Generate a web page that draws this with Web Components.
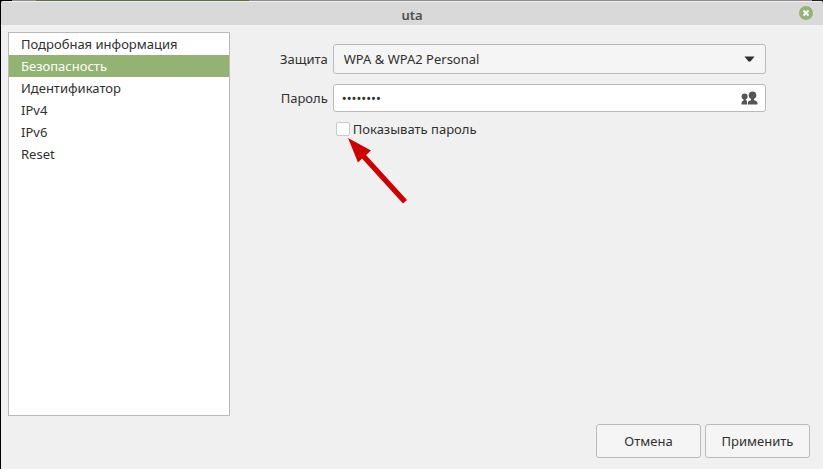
<!DOCTYPE html>
<html lang="ru">
<head>
<meta charset="utf-8">
<meta name="viewport" content="width=device-width, initial-scale=1">
<title>uta</title>
<style>
  body {
    margin: 0;
    background: #000;
    color: #303030;
    font: 13px/22px "Noto Sans", "Open Sans", sans-serif;
  }
</style>
</head>
<body>
<dialog-window heading="uta">
  <page-list slot="sidebar">
    <page-item>Подробная информация</page-item>
    <page-item selected>Безопасность</page-item>
    <page-item>Идентификатор</page-item>
    <page-item>IPv4</page-item>
    <page-item>IPv6</page-item>
    <page-item>Reset</page-item>
  </page-list>
  <security-form></security-form>
  <push-button slot="actions">Отмена</push-button>
  <push-button slot="actions">Применить</push-button>
</dialog-window>

<script>
class DialogWindow extends HTMLElement {
  constructor() {
    super();
    const shadow = this.attachShadow({ mode: 'open' });

    shadow.innerHTML = `
      <style>
        :host {
          display: flex;
          flex-direction: column;
          box-sizing: border-box;
          min-height: 100vh;
          padding-left: 1px;
        }
        .behind {
          display: flex;
          height: 1px;
          background: #8e8a8e;
        }
        .behind i:nth-child(1) { width: 11px; background: #000; }
        .behind i:nth-child(2) { width: 24px; }
        .behind i:nth-child(3) { width: 213px; background: #5c7046; }
        .behind i:nth-child(4) { margin-left: auto; width: 11px; background: #222; }
        header {
          display: grid;
          grid-template-columns: 1fr auto 1fr;
          align-items: center;
          box-sizing: border-box;
          height: 24px;
          padding: 0 10px;
          border-top: 1px solid #f0f0f0;
          border-radius: 2px 2px 0 0;
          background: #d9d9d9;
        }
        h1 {
          grid-column: 2;
          margin: 0;
          padding-top: 2px;
          color: #505050;
          font-size: 13px;
          font-weight: 600;
          line-height: 20px;
        }
        .close {
          display: flex;
          justify-self: end;
          margin-bottom: 1px;
          padding: 0;
          border: 0;
          background: none;
        }
        .body {
          flex: 1;
          display: grid;
          grid-template-columns: 222px 1fr;
          padding: 7px 0 0 7px;
          background: #f0f0f0;
        }
        footer {
          display: flex;
          justify-content: flex-end;
          gap: 4px;
          padding: 8px 13px 11px;
          background: #f0f0f0;
        }
      </style>
      <div class="behind"><i></i><i></i><i></i><i></i></div>
      <header>
        <h1></h1>
        <button class="close" type="button" aria-label="Закрыть">
          <svg width="14" height="14" viewBox="0 0 14 14">
            <circle cx="7" cy="7" r="7" fill="#92b372"/>
            <path d="M4.500 4.500l5 5m0-5l-5 5" stroke="#fff" stroke-width="2"/>
          </svg>
        </button>
      </header>
      <div class="body">
        <slot name="sidebar"></slot>
        <slot></slot>
      </div>
      <footer><slot name="actions"></slot></footer>
    `;
  }

  connectedCallback() {
    this.shadowRoot.querySelector('h1').textContent = this.getAttribute('heading');
  }
}

class PageList extends HTMLElement {
  constructor() {
    super();
    this.attachShadow({ mode: 'open' }).innerHTML = `
      <style>
        :host {
          display: block;
          border: 1px solid #bababa;
          background: #fff;
        }
      </style>
      <nav><slot></slot></nav>
    `;
    this.addEventListener('click', (e) => {
      const item = e.target.closest('page-item');
      if (!item) return;
      this.querySelectorAll('page-item').forEach((el) => {
        el.toggleAttribute('selected', el === item);
      });
    });
  }
}

class PageItem extends HTMLElement {
  constructor() {
    super();
    this.attachShadow({ mode: 'open' }).innerHTML = `
      <style>
        :host { display: block; }
        :host([selected]) {
          background: #92b372;
          color: #fff;
        }
        a {
          display: block;
          padding: 0 12px;
          color: inherit;
          text-decoration: none;
        }
      </style>
      <a href="#"><slot></slot></a>
    `;
  }
}

class SecurityForm extends HTMLElement {
  constructor() {
    super();
    this.attachShadow({ mode: 'open' }).innerHTML = `
      <style>
        :host { display: block; }
        form {
          display: grid;
          grid-template-columns: auto 1fr;
          align-items: center;
          gap: 10px 5px;
          padding: 12px 57px 0 50px;
        }
        label { text-align: right; }
        .field {
          display: grid;
          align-items: center;
        }
        .field > * { grid-area: 1 / 1; }
        .field svg {
          justify-self: end;
          margin-right: 8px;
          pointer-events: none;
        }
        .field .caret { margin-right: 11px; }
        select, .password {
          box-sizing: border-box;
          width: 100%;
          border: 1px solid #bababa;
          border-radius: 3px;
          color: inherit;
          font: inherit;
        }
        select {
          appearance: none;
          height: 30px;
          padding: 0 32px 0 10px;
          background: #f5f5f5;
        }
        .password {
          height: 28px;
          padding: 0 32px 0 8px;
          background: #fff;
        }
        .check {
          grid-column: 2;
          position: relative;
          display: flex;
          align-items: center;
          gap: 3px;
          margin: -4px 0 0 3px;
        }
        .check input {
          appearance: none;
          width: 14px;
          height: 14px;
          margin: 0;
          border: 1px solid #c8c8c8;
          border-radius: 2px;
          background: #fff;
        }
        .check input:checked { background: #92b372; }
        .pointer {
          position: absolute;
          top: 20px;
          left: 12px;
          pointer-events: none;
        }
      </style>
      <form>
        <label for="security">Защита</label>
        <div class="field">
          <select id="security">
            <option>WPA &amp; WPA2 Personal</option>
          </select>
          <svg class="caret" width="11" height="6" viewBox="0 0 11 6">
            <path d="M.5 .5h10L6.500 5.500h-2z" fill="#303030"/>
          </svg>
        </div>
        <label for="password">Пароль</label>
        <div class="field">
          <input class="password" id="password" type="password" value="password">
          <svg width="17" height="14" viewBox="0 0 17 14" fill="#555">
            <circle cx="3.600" cy="5.500" r="3"/>
            <path d="M2.500 7h2.300v2.500H6V13.500H.5V12q0-2 2-2.500z"/>
            <circle cx="11.500" cy="4.300" r="3.800"/>
            <path d="M10 7h3v2.300q3.500.5 3.500 3v1.200H6.800v-1.200q0-2.500 3.200-3z"/>
          </svg>
        </div>
        <div class="check">
          <input id="show" type="checkbox">
          <label for="show">Показывать пароль</label>
          <svg class="pointer" width="60" height="66" viewBox="0 0 60 66" fill="#c00">
            <path d="M0 0l23 12.500-5 4.500L59 62l-4 3.500L14 20.500l-4 4z"/>
          </svg>
        </div>
      </form>
    `;
  }

  connectedCallback() {
    const password = this.shadowRoot.querySelector('#password');
    this.shadowRoot.querySelector('#show').addEventListener('change', (e) => {
      password.type = e.target.checked ? 'text' : 'password';
    });
  }
}

class PushButton extends HTMLElement {
  constructor() {
    super();
    this.attachShadow({ mode: 'open' }).innerHTML = `
      <style>
        :host { display: block; }
        button {
          min-width: 105px;
          height: 34px;
          padding: 0 12px;
          border: 1px solid #bababa;
          border-radius: 3px;
          background: #f5f5f5;
          color: inherit;
          font: inherit;
        }
        button:active { background: #dedede; }
      </style>
      <button type="button"><slot></slot></button>
    `;
  }
}

customElements.define('dialog-window', DialogWindow);
customElements.define('page-list', PageList);
customElements.define('page-item', PageItem);
customElements.define('security-form', SecurityForm);
customElements.define('push-button', PushButton);
</script>
</body>
</html>
